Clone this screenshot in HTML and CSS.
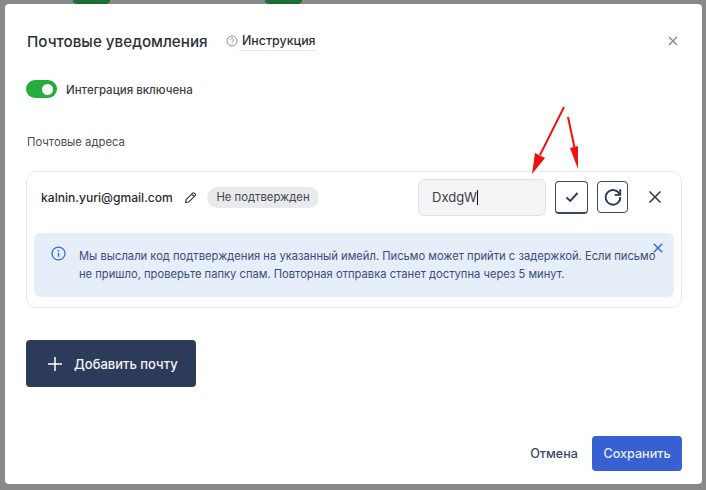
FILE: index.html
```html
<!DOCTYPE html>
<html lang="ru">
<head>
<meta charset="utf-8">
<title>Почтовые уведомления</title>
<link rel="stylesheet" href="styles.css">
</head>
<body>
<div class="backdrop-strip">
  <span class="bg-badge"></span>
  <span class="bg-badge second"></span>
</div>
<main class="modal">
  <header class="modal-head">
    <h1 class="title">Почтовые уведомления</h1>
    <a class="guide">
      <svg class="guide-icon" viewBox="0 0 12 12" width="12" height="12"><circle cx="6" cy="6" r="5" fill="none" stroke="#8b93ad" stroke-width="1"/><path d="M4.6 4.7a1.45 1.45 0 1 1 2.2 1.3c-.5.3-.8.6-.8 1.1" fill="none" stroke="#8b93ad" stroke-width="1"/><circle cx="6" cy="8.7" r=".6" fill="#8b93ad"/></svg>
      <span class="guide-text">Инструкция</span>
    </a>
    <svg class="close-modal" viewBox="0 0 10 10" width="10" height="10"><path d="M1 1l8 8M9 1l-8 8" stroke="#85888f" stroke-width="1.3" fill="none"/></svg>
  </header>

  <div class="toggle-row">
    <span class="toggle"><span class="knob"></span></span>
    <span class="toggle-label">Интеграция включена</span>
  </div>

  <div class="section-label">Почтовые адреса</div>

  <section class="card">
    <div class="email-row">
      <span class="email">kalnin.yuri@gmail.com</span>
      <svg class="pencil" viewBox="0 0 14 14" width="13" height="13"><path d="M1.6 12.4l.7-3.2 7-7a1.2 1.2 0 0 1 1.7 0l1 1a1.2 1.2 0 0 1 0 1.7l-7 7zM8.2 3.3l2.6 2.6" fill="none" stroke="#33363f" stroke-width="1.2" stroke-linejoin="round"/></svg>
      <span class="status">Не подтвержден</span>
      <span class="code-input">DxdgW<span class="caret"></span></span>
      <button class="icon-btn confirm">
        <svg viewBox="0 0 14 12" width="14" height="12"><path d="M1.5 6.5l3.8 3.5 7.2-8" fill="none" stroke="#2c3b5a" stroke-width="1.9"/></svg>
      </button>
      <button class="icon-btn resend">
        <svg viewBox="0 0 20 20" width="20" height="20"><path d="M16.6 7.2A7.3 7.3 0 1 0 17.3 10" fill="none" stroke="#2c3b5a" stroke-width="1.9"/><path d="M11.6 7.9h5.6V2.3" fill="none" stroke="#2c3b5a" stroke-width="1.9"/></svg>
      </button>
      <svg class="remove" viewBox="0 0 14 14" width="14" height="14"><path d="M1.5 1.5l11 11M12.5 1.5l-11 11" stroke="#2c3b5a" stroke-width="1.6" fill="none"/></svg>
    </div>
    <div class="notice">
      <svg class="notice-icon" viewBox="0 0 16 16" width="15" height="15"><circle cx="8" cy="8" r="6.9" fill="none" stroke="#3d64d8" stroke-width="1.3"/><circle cx="8" cy="5" r=".9" fill="#3d64d8"/><path d="M8 7.2v4.3" stroke="#3d64d8" stroke-width="1.4"/></svg>
      <p class="notice-text">Мы выслали код подтверждения на указанный имейл. Письмо может прийти с задержкой. Если письмо не пришло, проверьте папку спам. Повторная отправка станет доступна через 5 минут.</p>
      <svg class="notice-close" viewBox="0 0 10 10" width="10" height="10"><path d="M.8.8l8.4 8.4M9.2.8L.8 9.2" stroke="#3d64d8" stroke-width="1.5" fill="none"/></svg>
    </div>
  </section>

  <button class="add-btn">
    <svg viewBox="0 0 14 14" width="14" height="14"><path d="M7 0v14M0 7h14" stroke="#fff" stroke-width="1.5"/></svg>
    <span>Добавить почту</span>
  </button>

  <footer class="modal-foot">
    <button class="cancel">Отмена</button>
    <button class="save">Сохранить</button>
  </footer>
</main>
<svg class="annotation" viewBox="0 0 706 490" width="706" height="490">
  <path d="M564 107L540 155" stroke="#f40f0f" stroke-width="2" fill="none"/>
  <path d="M532 174L535 153L545 158Z" fill="#f40f0f"/>
  <path d="M568 117L575 150" stroke="#f40f0f" stroke-width="2" fill="none"/>
  <path d="M578 169L570 148L578 146Z" fill="#f40f0f"/>
</svg>
</body>
</html>
```
FILE: styles.css
```css
* { box-sizing: border-box; }
html, body { margin: 0; height: 100%; }
body {
  width: 706px;
  height: 490px;
  overflow: hidden;
  background: #89898c;
  font-family: Inter, "Noto Sans", sans-serif;
  color: #2b2e36;
  position: relative;
}
.backdrop-strip {
  height: 4px;
  display: flex;
  padding-left: 73px;
  overflow: hidden;
}
.bg-badge {
  width: 37px;
  height: 4px;
  background: #1f6d36;
  border-radius: 0 0 8px 8px;
}
.bg-badge.second { margin-left: 155px; }
.modal {
  width: 697px;
  height: 480px;
  margin-left: 5px;
  background: #fff;
  border-radius: 4px;
  padding: 0 20px 0 21px;
  display: flex;
  flex-direction: column;
}
.modal-head {
  display: flex;
  align-items: center;
  height: 24px;
  margin-top: 25px;
}
.title {
  margin: 0;
  padding-left: 1px;
  font-size: 15.2px;
  font-weight: 500;
  color: #2d3038;
  width: 200px;
  white-space: nowrap;
}
.guide { display: flex; align-items: center; gap: 1px; }
.guide-text {
  font-size: 12.4px;
  font-weight: 500;
  color: #2d3038;
  border-bottom: 1px solid #e6e8ee;
  line-height: 19px;
  padding-left: 3px;
}
.close-modal { margin-left: auto; margin-right: 4px; }
.toggle-row {
  display: flex;
  align-items: center;
  gap: 9px;
  margin-top: 27px;
  height: 18px;
}
.toggle {
  width: 31px;
  height: 18px;
  border-radius: 9px;
  background: #26ab3e;
  display: flex;
  align-items: center;
  justify-content: flex-end;
  padding-right: 4px;
}
.knob { width: 11px; height: 11px; border-radius: 50%; background: #fff; }
.toggle-label { font-size: 11.5px; font-weight: 500; color: #3a3d45; white-space: nowrap; padding-top: 1px; }
.section-label {
  margin-top: 36px;
  padding-left: 1px;
  font-size: 11.3px;
  color: #4a4d55;
  line-height: 16px;
}
.card {
  margin-top: 21px;
  width: 656px;
  height: 137px;
  border: 1px solid #e7e8ec;
  border-radius: 10px;
  padding: 0 7px;
}
.email-row {
  display: flex;
  align-items: center;
  height: 50px;
  padding-left: 7px;
}
.email { font-size: 12.1px; font-weight: 500; color: #2a2d35; white-space: nowrap; width: 137px; }
.pencil { margin-left: 6px; }
.status {
  margin-left: 10px;
  height: 21px;
  line-height: 21px;
  width: 112px;
  text-align: center;
  border-radius: 11px;
  background: #e9eaec;
  font-size: 11.3px;
  color: #44474f;
  white-space: nowrap;
}
.code-input {
  margin-left: 99px;
  width: 128px;
  height: 37px;
  background: #f3f4f5;
  border: 1px solid #dfe2e8;
  border-radius: 6px;
  padding-left: 13px;
  font-size: 13px;
  line-height: 35px;
  color: #3a3d45;
  display: flex;
  align-items: center;
}
.caret { width: 1px; height: 15px; background: #111; }
.icon-btn {
  padding: 0;
  background: #fff;
  border: 1px solid #3b4968;
  border-bottom-width: 2px;
  border-radius: 4px;
  display: flex;
  align-items: center;
  justify-content: center;
}
.confirm { margin-left: 9px; width: 33px; height: 33px; }
.resend { margin-left: 9px; width: 31px; height: 32px; border-bottom-width: 1px; }
.remove { margin-left: 20px; }
.notice {
  position: relative;
  display: flex;
  align-items: flex-start;
  margin-top: 11px;
  height: 64px;
  width: 640px;
  background: #e6eef9;
  border-radius: 6px;
  padding: 13px 0 0 17px;
}
.notice-icon { flex: none; margin-right: 13px; }
.notice-text {
  margin: 2px 0 0 0;
  width: 585px;
  flex: none;
  font-size: 11.2px;
  line-height: 17.5px;
  color: #3b4d78;
}
.notice-close { position: absolute; top: 10px; right: 11px; }
.add-btn {
  margin-top: 32px;
  width: 170px;
  height: 47px;
  border: 0;
  border-radius: 4px;
  background: #2c3b5a;
  color: #f2f4f8;
  font: 500 13px Inter, "Noto Sans", sans-serif;
  display: flex;
  align-items: center;
  padding: 0 0 0 22px;
  gap: 12px;
}
.modal-foot {
  margin-top: 49px;
  display: flex;
  justify-content: flex-end;
  align-items: center;
  gap: 14px;
  width: 656px;
}
.cancel {
  padding: 0;
  background: none;
  border: 0;
  color: #3b4968;
  font: 500 12.6px Inter, "Noto Sans", sans-serif;
}
.save {
  width: 90px;
  height: 35px;
  border: 0;
  border-radius: 4px;
  background: #3760d0;
  color: #e9eefb;
  font: 500 12.6px Inter, "Noto Sans", sans-serif;
}
.annotation { position: absolute; left: 0; top: 0; pointer-events: none; }
```
